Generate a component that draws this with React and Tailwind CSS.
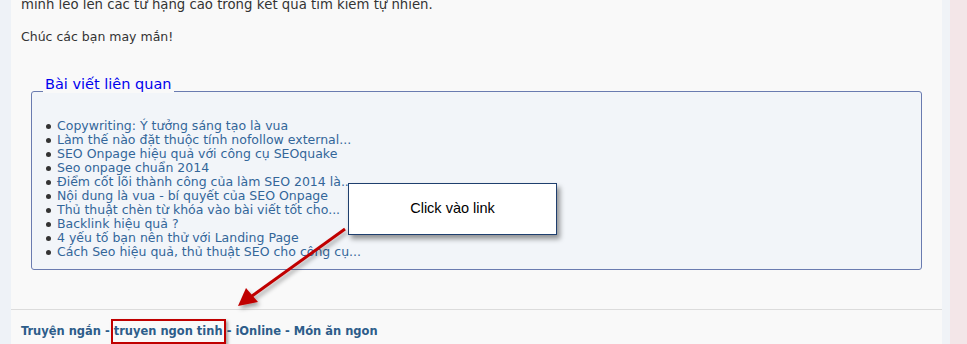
const related = [
  "Copywriting: Ý tưởng sáng tạo là vua",
  "Làm thế nào đặt thuộc tính nofollow external...",
  "SEO Onpage hiệu quả với công cụ SEOquake",
  "Seo onpage chuẩn 2014",
  "Điểm cốt lõi thành công của làm SEO 2014 là...",
  "Nội dung là vua - bí quyết của SEO Onpage",
  "Thủ thuật chèn từ khóa vào bài viết tốt cho...",
  "Backlink hiệu quả ?",
  "4 yếu tố bạn nên thử với Landing Page",
  "Cách Seo hiệu quả, thủ thuật SEO cho công cụ...",
];

export default function App() {
  return (
    <div className="relative flex h-[344px] w-[967px] overflow-hidden bg-[#eef2f7] font-['DejaVu_Sans',sans-serif]">
      {/* left gutter */}
      <div className="w-[11px] shrink-0" />

      {/* main post panel */}
      <div className="flex w-[931px] shrink-0 flex-col bg-[#f9f9f9]">
        <div className="px-[10px] text-[13.25px] leading-[16px] text-[#333]">
          <p className="-mt-[3px]">mình leo lên các từ hạng cao trong kết quả tìm kiếm tự nhiên.</p>
          <p className="mt-[16px] text-[12.5px]">Chúc các bạn may mắn!</p>
        </div>

        {/* related posts box; legend sits on the top border */}
        <div className="relative mx-[20px] mt-[46px] h-[179px] rounded-[3px] border border-[#6a7bb0] bg-[#f2f5f9] px-[14px] pt-[27px]">
          <span className="absolute -top-[17px] left-[11px] bg-[#f9f9f9] px-[2px] text-[14.5px] leading-[18px] text-[#0000ee]">
            Bài viết liên quan
          </span>
          <ul>
            {related.map((t) => (
              <li key={t} className="flex items-center text-[12.5px] leading-[14px] text-[#336699]">
                <span className="mr-[6px] h-[5px] w-[5px] rounded-full bg-[#333]" />
                {t}
              </li>
            ))}
          </ul>
        </div>

        <div className="mt-[39px] h-px w-full bg-[#dcdcdc]" />

        {/* footer links */}
        <div className="px-[10px] pt-[13px] font-['DejaVu_Sans_Condensed',sans-serif] text-[12.75px] font-bold leading-[16px] text-[#2d5d8a]">
          Truyện ngắn -{" "}
          <span className="relative">
            truyen ngon tinh
            <span className="absolute -bottom-[6px] -left-[3px] -right-[3px] -top-[4px] border-2 border-[#c00000] shadow-[2px_2px_3px_rgba(0,0,0,0.35)]" />
          </span>{" "}
          - iOnline - Món ăn ngon
        </div>
      </div>

      {/* right edge strips */}
      <div className="w-[8px] shrink-0 bg-[#f0f3f7]" />
      <div className="flex-1 bg-[#f3e6e8]" />

      {/* callout */}
      <div className="absolute left-[348px] top-[183px] flex h-[52px] w-[209px] items-center justify-center border border-[#1f3f6e] bg-white font-['Liberation_Sans',sans-serif] text-[14.5px] text-black shadow-[3px_4px_5px_rgba(0,0,0,0.4)]">
        Click vào link
      </div>

      {/* arrow */}
      <svg className="absolute left-0 top-0" width="967" height="344" viewBox="0 0 967 344">
        <defs>
          <filter id="sh" x="-20%" y="-20%" width="140%" height="140%">
            <feDropShadow dx="2" dy="3" stdDeviation="2" floodColor="#000" floodOpacity="0.35" />
          </filter>
        </defs>
        <g filter="url(#sh)">
          <line x1="345" y1="229" x2="252" y2="296" stroke="#c00000" strokeWidth="3" />
          <polygon points="238,306 246,288 258,302" fill="#c00000" />
        </g>
      </svg>
    </div>
  );
}
